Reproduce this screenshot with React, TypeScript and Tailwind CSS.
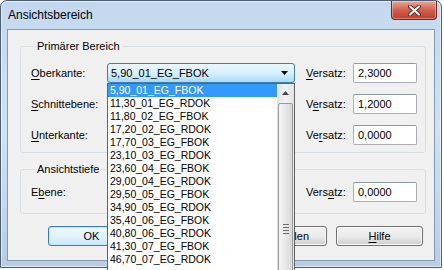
import React from "react";

const levels = [
  "5,90_01_EG_FBOK",
  "11,30_01_EG_RDOK",
  "11,80_02_EG_FBOK",
  "17,20_02_EG_RDOK",
  "17,70_03_EG_FBOK",
  "23,10_03_EG_RDOK",
  "23,60_04_EG_FBOK",
  "29,00_04_EG_RDOK",
  "29,50_05_EG_FBOK",
  "34,90_05_EG_RDOK",
  "35,40_06_EG_FBOK",
  "40,80_06_EG_RDOK",
  "41,30_07_EG_FBOK",
  "46,70_07_EG_RDOK",
];

function Key({ children }: { children: React.ReactNode }) {
  return <span className="underline underline-offset-[2px]">{children}</span>;
}

function Field({ value }: { value: string }) {
  return (
    <div className="flex h-[20px] w-[64px] items-center rounded-[2px] border border-[#abadb3] border-t-[#8e9aa8] bg-white pl-[4px]">
      {value}
    </div>
  );
}

function Combo({ active, value }: { active?: boolean; value?: string }) {
  if (active) {
    return (
      <div className="flex h-[20px] w-[188px] items-center rounded-[3px] border border-[#3c7fb1] bg-gradient-to-b from-[#eaf6fd] via-[#d9f0fc] to-[#a7d9f5] pl-[3px] pr-[6px]">
        <span className="flex-1">{value}</span>
        <svg width="7" height="4" viewBox="0 0 7 4">
          <path d="M0 0h7L3.5 4z" fill="#000" />
        </svg>
      </div>
    );
  }
  return (
    <div className="h-[20px] w-[188px] rounded-[3px] border border-[#707070] bg-gradient-to-b from-[#f2f2f2] to-[#dddddd]" />
  );
}

function Button({ children, def, end }: { children: React.ReactNode; def?: boolean; end?: boolean }) {
  const base = end
    ? "flex h-[20px] w-[87px] items-center justify-end pr-[17px] rounded-[3px] border"
    : "flex h-[20px] w-[87px] items-center justify-center rounded-[3px] border";
  return (
    <div
      className={
        def
          ? base + " border-[#3c7fb1] bg-gradient-to-b from-[#eaf6fd] via-[#e3f2fb] to-[#cde8f7] shadow-[inset_0_0_0_1px_#bfe3f8]"
          : base + " border-[#707070] bg-gradient-to-b from-[#f2f2f2] via-[#ebebeb] to-[#cfcfcf] shadow-[inset_0_0_0_1px_#fcfcfc]"
      }
    >
      {children}
    </div>
  );
}

export default function App() {
  return (
    <div className="h-[270px] w-[444px] overflow-hidden bg-white font-['Liberation_Sans',Arial,sans-serif] text-[11px] text-black">
      <div className="flex h-[268px] w-[442px] flex-col rounded-t-[7px] border border-[#4d5e72] bg-gradient-to-b from-[#c3d8ef] via-[#d0e1f3] to-[#b8cde5] shadow-[inset_0_0_0_1px_rgba(255,255,255,0.55)]">
        {/* title bar */}
        <div className="flex h-[28px] items-start">
          <span className="pl-[7px] pt-[7px] text-[12px] leading-[14px]">Ansichtsbereich</span>
          <div className="ml-auto mr-[4px] flex h-[19px] w-[46px] items-center justify-center rounded-b-[4px] border border-t-0 border-[#6b2a22] bg-gradient-to-b from-[#e9a899] via-[#d15f4e] to-[#c23b26] shadow-[inset_0_0_0_1px_rgba(255,255,255,0.35)]">
            <svg width="13" height="11" viewBox="0 0 13 11">
              <path d="M2 1.5l9 8M11 1.5l-9 8" stroke="#5a2a22" strokeWidth="4" strokeLinecap="round" />
              <path d="M2 1.5l9 8M11 1.5l-9 8" stroke="#fff" strokeWidth="2.2" strokeLinecap="round" />
            </svg>
          </div>
        </div>

        {/* client area */}
        <div className="relative mx-[6px] mb-[6px] flex-1 border border-[#8399b3] bg-[#f0f0f0] pl-[12px] pt-[10px]">
          <fieldset className="w-[406px] rounded-[3px] border border-[#d5dfe5] pb-[7px] pl-[10px]">
            <legend className="ml-[4px] px-[2px] leading-[13px]">Primärer Bereich</legend>
            <div className="flex flex-col gap-[11px] pt-[10px]">
              <div className="flex h-[20px] items-center">
                <span className="w-[76px]">
                  <Key>O</Key>berkante:
                </span>
                <Combo active value="5,90_01_EG_FBOK" />
                <span className="ml-[11px] w-[47px]">
                  <Key>V</Key>ersatz:
                </span>
                <Field value="2,3000" />
              </div>
              <div className="flex h-[20px] items-center">
                <span className="w-[76px]">
                  <Key>S</Key>chnittebene:
                </span>
                <Combo />
                <span className="ml-[11px] w-[47px]">
                  V<Key>e</Key>rsatz:
                </span>
                <Field value="1,2000" />
              </div>
              <div className="flex h-[20px] items-center">
                <span className="w-[76px]">
                  <Key>U</Key>nterkante:
                </span>
                <Combo />
                <span className="ml-[11px] w-[47px]">
                  Ve<Key>r</Key>satz:
                </span>
                <Field value="0,0000" />
              </div>
            </div>
          </fieldset>

          <fieldset className="mt-[10px] w-[406px] rounded-[3px] border border-[#d5dfe5] pb-[11px] pl-[10px]">
            <legend className="ml-[4px] px-[2px] leading-[13px]">Ansichtstiefe</legend>
            <div className="mt-[6px] flex h-[20px] items-center">
              <span className="w-[76px]">
                E<Key>b</Key>ene:
              </span>
              <Combo />
              <span className="ml-[11px] w-[47px]">
                Vers<Key>a</Key>tz:
              </span>
              <Field value="0,0000" />
            </div>
          </fieldset>

          <div className="mt-[12px] flex gap-[9px] pl-[28px]">
            <Button def>OK</Button>
            <Button>Anwenden</Button>
            <Button end>
              <span>Zurückstellen</span>
            </Button>
            <Button>
              <span>
                <Key>H</Key>ilfe
              </span>
            </Button>
          </div>

          {/* open dropdown list */}
          <div className="absolute left-[99px] top-[53px] flex h-[200px] w-[188px] border border-[#646464] bg-white">
            <div className="flex-1 text-[10.5px]">
              {levels.map((l, i) => (
                <div
                  key={l}
                  className={
                    i === 0
                      ? "h-[13px] bg-[#3399ff] pl-[2px] leading-[13px] text-white"
                      : "h-[13px] pl-[2px] leading-[13px]"
                  }
                >
                  {l}
                </div>
              ))}
            </div>
            <div className="flex w-[17px] flex-col bg-gradient-to-r from-[#e3e3e3] via-[#f2f2f2] to-[#e3e3e3]">
              <div className="flex h-[17px] items-center justify-center">
                <svg width="7" height="4" viewBox="0 0 7 4">
                  <path d="M3.5 0L7 4H0z" fill="#444" />
                </svg>
              </div>
              <div className="mx-[1px] mt-[2px] flex flex-1 items-center justify-center rounded-[2px] border border-[#9b9b9b] bg-gradient-to-r from-[#f4f4f4] via-[#e8e8e8] to-[#d8d8d8]">
                <div className="mt-[72px] flex flex-col gap-[2px]">
                  <div className="h-px w-[6px] bg-[#6d6d6d]" />
                  <div className="h-px w-[6px] bg-[#6d6d6d]" />
                  <div className="h-px w-[6px] bg-[#6d6d6d]" />
                  <div className="h-px w-[6px] bg-[#6d6d6d]" />
                </div>
              </div>
            </div>
          </div>
        </div>
      </div>
    </div>
  );
}
